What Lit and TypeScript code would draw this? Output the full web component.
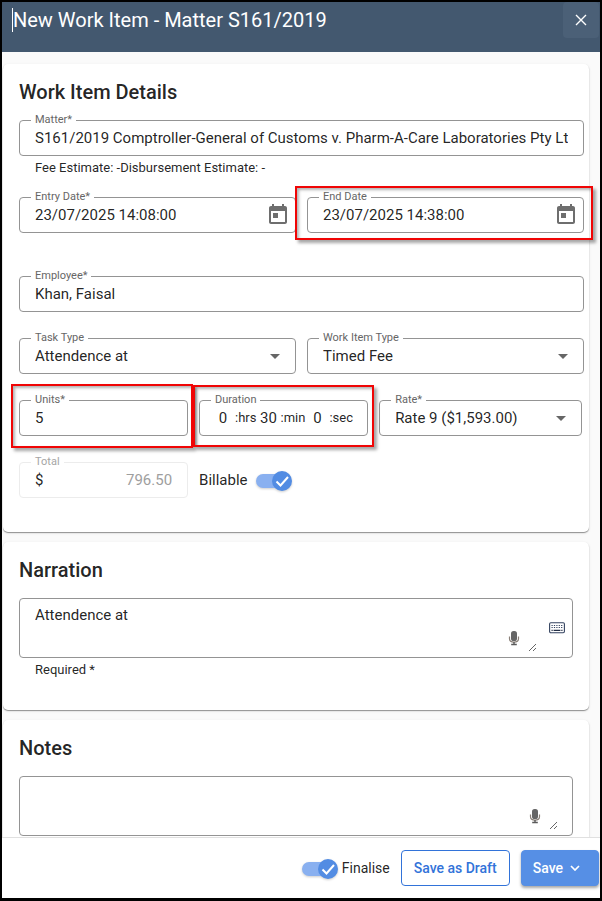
import { LitElement, html, css, svg, nothing, type TemplateResult } from "lit";
import { customElement, state } from "lit/decorators.js";

const calendarIcon = html`<svg class="icon-24" viewBox="0 0 24 24" aria-hidden="true">
  <path fill="#6e6e6e" d="M19 3h-1V1h-2v2H8V1H6v2H5c-1.11 0-1.99.9-1.99 2L3 19c0 1.1.89 2 2 2h14c1.1 0 2-.9 2-2V5c0-1.1-.9-2-2-2zm0 16H5V8h14v11zM7 10h5v5H7v-5z"/>
</svg>`;

const micIcon = html`<svg class="icon-mic" viewBox="0 0 12 16" aria-hidden="true">
  <rect x="3" y="1" width="6" height="10" rx="2.6" fill="#666"/>
  <path d="M1.5 6.5v2.3c0 2 1.8 3.3 4.5 3.3s4.5-1.3 4.5-3.3V6.5" fill="none" stroke="#8a8078" stroke-width="1.2"/>
  <path d="M6 12v2.2M3.2 14.5h5.6" fill="none" stroke="#5a5a5a" stroke-width="1.4"/>
</svg>`;

const keyboardIcon = html`<svg class="icon-keyboard" viewBox="0 0 16 12" aria-hidden="true">
  <rect x=".6" y=".8" width="14.8" height="10" rx="1.2" fill="#fff" stroke="#33425f" stroke-width="1.1"/>
  <path d="M2.5 3.5h11M2.5 5.5h11" stroke="#33425f" stroke-width="1.1" stroke-dasharray="1.2 1.2"/>
  <path d="M2.5 8.4h1.2M4.6 8.4h6.8M12.3 8.4h1.2" stroke="#222d45" stroke-width="1.2"/>
</svg>`;

@customElement("app-root")
export class AppRoot extends LitElement {
  static styles = css`
    :host {
      display: block;
      font-family: Roboto, "Liberation Sans", sans-serif;
      font-size: 15px;
      color: rgba(0, 0, 0, 0.87);
    }
    *, *::before, *::after { box-sizing: border-box; }
    input, select, textarea, button { font: inherit; color: inherit; margin: 0; }

    .dialog {
      display: flex;
      flex-direction: column;
      height: 100vh;
      border: 2px solid #000;
      border-bottom-width: 3px;
      background: #fafafa;
    }
    .titlebar {
      display: flex;
      flex: none;
      justify-content: space-between;
      align-items: flex-start;
      height: 50px;
      padding: 0 1px 0 10px;
      background: #43586f;
      color: #fff;
    }
    .title {
      margin: 6px 0 0;
      font-size: 20px;
      line-height: 24px;
      font-weight: 400;
      border-left: 1px solid #fff;
    }
    .close {
      display: grid;
      place-items: center;
      width: 36px;
      height: 36px;
      padding: 0;
      border: 0;
      border-radius: 4px;
      background: #4b6077;
    }
    .close svg { width: 12px; height: 12px; }

    .content {
      flex: 1;
      min-height: 0;
      overflow-y: auto;
      scrollbar-width: none;
      padding: 12px 11px 12px 1px;
      display: flex;
      flex-direction: column;
      gap: 10px;
    }
    .card {
      flex: none;
      padding: 16px 16px 28px;
      border-radius: 5px;
      background: #fff;
      box-shadow: 0 1px 1px rgba(0, 0, 0, 0.38), 0 1px 3px rgba(0, 0, 0, 0.1);
    }
    .card.details { padding: 16px 5px 34px 16px; }
    h2 {
      margin: 0 0 16px;
      font-size: 20px;
      line-height: 24px;
      font-weight: 500;
    }
    .hint {
      margin: 0;
      padding-left: 16px;
      font-size: 13px;
      line-height: 24px;
    }
    .rows { display: grid; gap: 26px; }
    .halves { display: grid; grid-template-columns: 1fr 1fr; gap: 11px; }
    .dates { margin: 17px 0; }
    .thirds {
      display: grid;
      grid-template-columns: 10fr 10fr 12fr;
      gap: 11px;
      padding-right: 2px;
    }

    .field {
      position: relative;
      display: flex;
      align-items: center;
      min-width: 0;
      height: 36px;
      margin: 0;
      padding: 0 15px;
      border: 1px solid #949494;
      border-radius: 4px;
      background: #fff;
    }
    .caption {
      position: absolute;
      top: -7px;
      left: 11px;
      padding: 0 4px;
      font-size: 11px;
      line-height: 12px;
      color: #666;
      background: #fff;
    }
    .control {
      flex: 1;
      min-width: 0;
      width: 100%;
      height: 32px;
      padding: 0 0 1px;
      border: 0;
      outline: 0;
      background: none;
      appearance: none;
    }
    .field.with-action { padding-right: 5px; }
    .action { display: grid; padding: 0; border: 0; background: none; }
    .icon-24 { width: 24px; height: 24px; }
    .caret { flex: none; width: 10px; height: 5px; pointer-events: none; }

    .field.disabled { border-color: #ececec; }
    .disabled .caption { color: #a5a5a5; }
    .disabled .control { color: #9e9e9e; text-align: right; }
    .currency { padding-bottom: 1px; }

    .duration { padding: 0 0 0 11px; }
    .part { flex: none; width: 24px; text-align: center; }
    .unit { font-size: 13px; line-height: 16px; }

    .mark {
      position: absolute;
      z-index: 1;
      border: 2px solid #f00505;
      pointer-events: none;
      box-shadow: 3px 3px 3px rgba(0, 0, 0, 0.35), inset 2px 2px 3px rgba(0, 0, 0, 0.3);
    }
    .mark.end { inset: -12px -10px -8px -13px; }
    .mark.units { inset: -17px -6px -13px -9px; }
    .mark.time { inset: -16px -7px -12px -7px; }

    .switch { display: flex; align-items: center; gap: 8px; }
    .switch.reverse { flex-direction: row-reverse; gap: 3px; }
    .toggle { position: relative; display: grid; width: 37px; height: 24px; }
    .toggle input { position: absolute; inset: 0; width: 100%; height: 100%; opacity: 0; }
    .toggle svg { width: 37px; height: 24px; filter: drop-shadow(0 1px 1px rgba(0, 0, 0, 0.2)); }

    .note {
      display: flex;
      height: 60px;
      padding: 0 14px 5px 15px;
      border: 1px solid #949494;
      border-radius: 4px;
    }
    .note-body { position: relative; display: flex; flex: 1; }
    .note textarea {
      flex: 1;
      width: 100%;
      height: 53px;
      padding: 6px 36px 0 0;
      border: 0;
      outline: 0;
      line-height: 20px;
      background: none;
      resize: vertical;
      overflow: hidden;
    }
    .mic { position: absolute; right: 17px; bottom: 6px; }
    .icon-mic { width: 12px; height: 16px; }
    .keys { align-self: center; padding: 4px 0 0 12px; margin-right: -7px; }
    .icon-keyboard { width: 16px; height: 12px; }

    .footer {
      display: flex;
      flex: none;
      justify-content: flex-end;
      align-items: flex-start;
      gap: 11px;
      padding: 12px 1px 12px 12px;
      border-top: 1px solid #e0e0e0;
      background: #fff;
    }
    .footer .switch { height: 36px; font-size: 14px; }
    .button {
      display: flex;
      align-items: center;
      gap: 7px;
      height: 36px;
      padding: 0 12px;
      border: 1px solid #3273d9;
      border-radius: 4px;
      font-size: 14px;
      font-weight: 500;
      color: #3273d9;
      background: #fff;
    }
    .button.primary {
      padding: 0 18px 0 11px;
      border-color: #568fe5;
      color: #fff;
      background: #568fe5;
      box-shadow: 0 2px 3px rgba(0, 0, 0, 0.35);
    }
    .chevron { width: 10px; height: 6px; }
  `;

  @state() private billable = true;
  @state() private finalise = true;

  private caret() {
    return html`<svg class="caret" viewBox="0 0 10 5" aria-hidden="true"><path fill="#666" d="M0 0h10L5 5z"/></svg>`;
  }

  private input(id: string, label: string, value: string, extra: unknown = nothing) {
    return html`<div class="field">
      <label class="caption" for=${id}>${label}</label>
      <input class="control" id=${id} type="text" .value=${value} />
      ${extra}
    </div>`;
  }

  private date(id: string, label: string, value: string, extra: unknown = nothing) {
    return html`<div class="field with-action">
      <label class="caption" for=${id}>${label}</label>
      <input class="control" id=${id} type="text" .value=${value} />
      <button class="action" type="button" aria-label="Open calendar">${calendarIcon}</button>
      ${extra}
    </div>`;
  }

  private select(id: string, label: string, value: string) {
    return html`<div class="field">
      <label class="caption" for=${id}>${label}</label>
      <select class="control" id=${id}><option>${value}</option></select>
      ${this.caret()}
    </div>`;
  }

  private toggle(label: string, on: boolean, change: (v: boolean) => void, reverse = false) {
    return html`<label class="switch ${reverse ? "reverse" : ""}">
      <span>${label}</span>
      <span class="toggle">
        <input type="checkbox" role="switch" .checked=${on}
          @change=${(e: Event) => change((e.target as HTMLInputElement).checked)} />
        <svg viewBox="0 0 37 24" aria-hidden="true">
          <rect x="0" y="6" width="34" height="14" rx="7" fill=${on ? "#89b0f0" : "#bbb"} />
          <circle cx=${on ? 26 : 10} cy="13" r="10" fill=${on ? "#528ce3" : "#fff"} />
          ${on ? svg`<path d="M20.5 13.5l4 4 7.5-8.5" fill="none" stroke="#fff" stroke-width="2"/>` : nothing}
        </svg>
      </span>
    </label>`;
  }

  private note(id: string, title: string, value: string, side: unknown = nothing): TemplateResult {
    return html`<div class="note">
      <div class="note-body">
        <textarea id=${id} aria-label=${title} .value=${value}></textarea>
        <button class="action mic" type="button" aria-label="Dictate">${micIcon}</button>
      </div>
      ${side}
    </div>`;
  }

  render() {
    return html`<div class="dialog">
      <header class="titlebar">
        <h1 class="title">New Work Item - Matter S161/2019</h1>
        <button class="close" type="button" aria-label="Close">
          <svg viewBox="0 0 12 12"><path d="M1 1l10 10M11 1L1 11" stroke="#fff" stroke-width="1.4"/></svg>
        </button>
      </header>
      <main class="content">
        <section class="card details">
          <h2>Work Item Details</h2>
          ${this.input("matter", "Matter*", "S161/2019 Comptroller-General of Customs v. Pharm-A-Care Laboratories Pty Ltd")}
          <p class="hint">Fee Estimate: -Disbursement Estimate: -</p>
          <div class="rows">
            <div class="halves dates">
              ${this.date("entry", "Entry Date*", "23/07/2025 14:08:00")}
              ${this.date("end", "End Date", "23/07/2025 14:38:00", html`<span class="mark end"></span>`)}
            </div>
            ${this.input("employee", "Employee*", "Khan, Faisal")}
            <div class="halves">
              ${this.select("task", "Task Type", "Attendence at")}
              ${this.select("type", "Work Item Type", "Timed Fee")}
            </div>
            <div class="thirds">
              ${this.input("units", "Units*", "5", html`<span class="mark units"></span>`)}
              <div class="field duration" role="group" aria-labelledby="duration">
                <span class="caption" id="duration">Duration</span>
                <input class="control part" id="hrs" .value=${"0"} /><label class="unit" for="hrs">:hrs</label>
                <input class="control part" id="min" .value=${"30"} /><label class="unit" for="min">:min</label>
                <input class="control part" id="sec" .value=${"0"} /><label class="unit" for="sec">:sec</label>
                <span class="mark time"></span>
              </div>
              ${this.select("rate", "Rate*", "Rate 9 ($1,593.00)")}
            </div>
            <div class="thirds">
              <div class="field disabled">
                <label class="caption" for="total">Total</label>
                <span class="currency">$</span>
                <input class="control" id="total" disabled .value=${"796.50"} />
              </div>
              ${this.toggle("Billable", this.billable, (v) => (this.billable = v))}
            </div>
          </div>
        </section>
        <section class="card">
          <h2>Narration</h2>
          ${this.note("narration", "Narration", "Attendence at",
            html`<button class="action keys" type="button" aria-label="Keyboard">${keyboardIcon}</button>`)}
          <p class="hint">Required *</p>
        </section>
        <section class="card">
          <h2>Notes</h2>
          ${this.note("notes", "Notes", "")}
        </section>
      </main>
      <footer class="footer">
        ${this.toggle("Finalise", this.finalise, (v) => (this.finalise = v), true)}
        <button class="button" type="button">Save as Draft</button>
        <button class="button primary" type="button">Save
          <svg class="chevron" viewBox="0 0 10 6" aria-hidden="true"><path d="M1 1l4 4 4-4" fill="none" stroke="#fff" stroke-width="1.7"/></svg>
        </button>
      </footer>
    </div>`;
  }
}
